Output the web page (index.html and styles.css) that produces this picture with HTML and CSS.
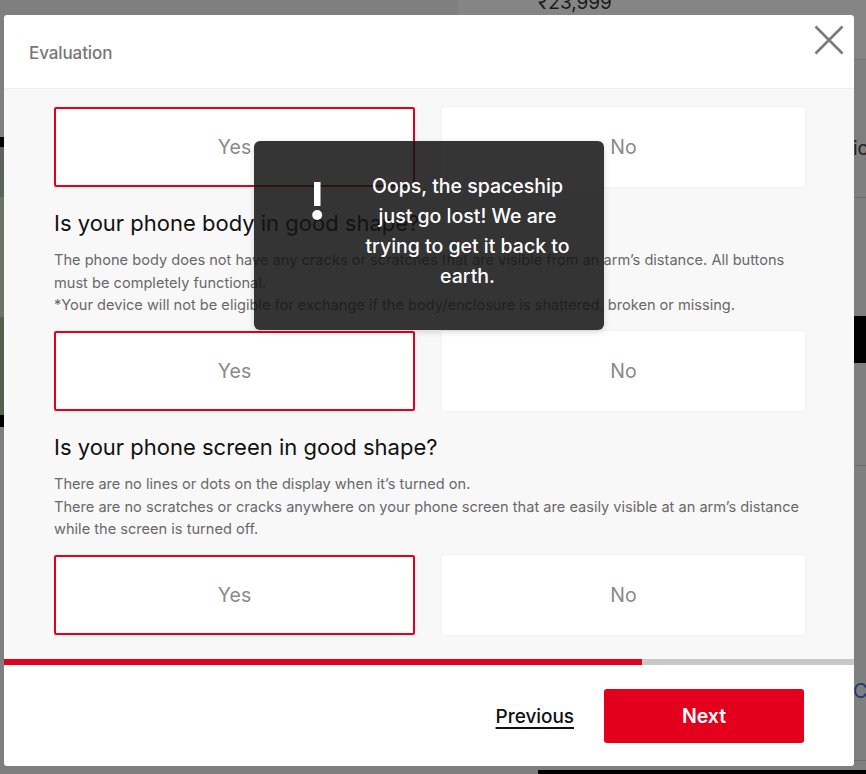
FILE: index.html
```html
<!DOCTYPE html>
<html lang="en">
<head>
<meta charset="utf-8">
<title>Evaluation</title>
<link rel="stylesheet" href="styles.css">
</head>
<body>
<div class="page">
  <div class="bg-top-right"></div>
  <div class="bg-price">₹23,999</div>
  <div class="bg-strip"></div>
  <div class="bg-ic">ic</div>
  <div class="bg-black-band"></div>
  <div class="bg-line bg-line1"></div>
  <div class="bg-line bg-line2"></div>
  <div class="bg-line bg-line3"></div>
  <div class="bg-cl">Cl</div>
  <div class="bg-bottom-bar"></div>
</div>

<div class="modal" role="dialog" aria-label="Evaluation">
  <header class="modal-header">
    <h2 class="modal-title">Evaluation</h2>
    <button class="close" aria-label="Close">
      <svg width="30" height="30" viewBox="0 0 30 30"><path d="M1.5 1.5 L28.5 28.5 M28.5 1.5 L1.5 28.5" stroke="#7a7a7a" stroke-width="2.6" fill="none"/></svg>
    </button>
  </header>

  <div class="modal-body">
    <div class="options">
      <button class="option selected">Yes</button>
      <button class="option">No</button>
    </div>

    <h3 class="question">Is your phone body in good shape?</h3>
    <p class="desc">The phone body does not have any cracks or scratches that are visible from an arm’s distance. All buttons must be completely functional.<br>*Your device will not be eligible for exchange if the body/enclosure is shattered, broken or missing.</p>

    <div class="options">
      <button class="option selected">Yes</button>
      <button class="option">No</button>
    </div>

    <h3 class="question">Is your phone screen in good shape?</h3>
    <p class="desc">There are no lines or dots on the display when it’s turned on.<br>There are no scratches or cracks anywhere on your phone screen that are easily visible at an arm’s distance while the screen is turned off.</p>

    <div class="options">
      <button class="option selected">Yes</button>
      <button class="option">No</button>
    </div>
  </div>

  <div class="progress"><div class="progress-fill" style="width:75%"></div></div>

  <footer class="modal-footer">
    <a class="prev" href="#">Previous</a>
    <button class="next">Next</button>
  </footer>

  <div class="toast" role="alert">
    <svg class="toast-icon" width="12" height="40" viewBox="0 0 12 40"><rect x="3" y="0" width="6.5" height="24" fill="#fff"/><circle cx="6.2" cy="33" r="5" fill="#fff"/></svg>
    <p class="toast-text">Oops, the spaceship just go lost! We are trying to get it back to earth.</p>
  </div>
</div>
</body>
</html>
```

FILE: styles.css
```css
* { box-sizing: border-box; }
html, body { margin: 0; padding: 0; }
body {
  width: 866px;
  height: 774px;
  overflow: hidden;
  background: #7f7f7f;
  font-family: Inter, "Liberation Sans", Arial, sans-serif;
  position: relative;
}

/* dimmed page behind the dialog */
.page { position: absolute; inset: 0; }
.bg-top-right { position: absolute; left: 458px; top: 0; width: 408px; height: 60px; background: #858585; border-bottom: 1px solid #747474; }
.bg-price { position: absolute; left: 538px; top: -9px; font-size: 19px; color: #1a1a1a; }
.bg-strip { position: absolute; left: 0; top: 137px; width: 5px; height: 290px;
  background: linear-gradient(#000 0 10px, #5d635a 10px 60px, #6b7366 60px 180px, #55604f 180px 278px, #000 278px 288px); }
.bg-ic { position: absolute; left: 853px; top: 137px; font-size: 19px; color: #1f1f1f; }
.bg-black-band { position: absolute; left: 852px; top: 316px; width: 14px; height: 47px; background: #000; }
.bg-line { position: absolute; left: 852px; width: 14px; height: 1px; background: #6c6c6c; }
.bg-line1 { top: 197px; }
.bg-line2 { top: 465px; }
.bg-line3 { top: 760px; }
.bg-cl { position: absolute; left: 853px; top: 679px; font-size: 20px; color: #213a74; }
.bg-bottom-bar { position: absolute; left: 538px; top: 770px; width: 328px; height: 4px; background: #000; }

/* dialog */
.modal {
  position: absolute;
  left: 4px;
  top: 15px;
  width: 850px;
  height: 751px;
  background: #fff;
  border-radius: 3px;
  display: flex;
  flex-direction: column;
  overflow: hidden;
}
.modal-header {
  height: 74px;
  flex: none;
  display: flex;
  align-items: center;
  justify-content: space-between;
  padding: 0 9px 0 25px;
  border-bottom: 1px solid #eeeeee;
}
.modal-title {
  margin: 0;
  font-size: 17px;
  font-weight: 500;
  color: #777;
  letter-spacing: -0.1px;
  padding-top: 2px;
}
.close {
  border: 0;
  background: none;
  padding: 0;
  width: 32px;
  height: 32px;
  margin-top: -24px;
  display: flex;
  align-items: center;
  justify-content: center;
}

.modal-body {
  flex: 1;
  background: #f8f8f8;
  padding: 18px 49px 0 50px;
  overflow: hidden;
}
.options {
  display: grid;
  grid-template-columns: 361px 363px;
  column-gap: 27px;
}
.option {
  height: 80px;
  border: 2px solid transparent;
  background: #fff;
  border-radius: 3px;
  box-shadow: 0 0 3px rgba(0,0,0,0.06);
  font-family: inherit;
  font-size: 19.5px;
  color: #8a8a8a;
  padding: 0;
}
.option.selected {
  border-color: #e2001d;
  border-radius: 2px;
  box-shadow: none;
}
.question {
  margin: 22px 0 0;
  font-size: 22px;
  line-height: 28px;
  font-weight: normal;
  color: #111;
}
.desc {
  margin: 12px 0 14.5px;
  font-size: 14.6px;
  line-height: 22.5px;
  color: #686868;
}

.progress {
  height: 6px;
  flex: none;
  background: #c8c8c8;
}
.progress-fill { height: 100%; background: #e2001d; }

.modal-footer {
  height: 101px;
  flex: none;
  display: flex;
  align-items: center;
  justify-content: flex-end;
  gap: 30px;
  padding: 0 50px 0 0;
}
.prev {
  font-size: 19px;
  font-weight: 500;
  color: #111;
  letter-spacing: -0.05px;
  text-decoration: underline;
  text-underline-offset: 4px;
  text-decoration-thickness: 2px;
  margin-top: 1px;
}
.next {
  width: 200px;
  height: 54px;
  background: #e2001d;
  color: #fff;
  border: 0;
  border-radius: 3px;
  font-family: inherit;
  font-size: 19.5px;
  font-weight: 600;
}

/* toast */
.toast {
  position: absolute;
  left: 250px;
  top: 126px;
  width: 350px;
  height: 189px;
  background: rgba(20, 20, 20, 0.86);
  border-radius: 6px;
  box-shadow: 0 2px 6px rgba(0,0,0,0.15);
  display: flex;
  align-items: flex-start;
  padding: 30px 0 0 57px;
}
.toast-icon { flex: none; margin-top: 11px; }
.toast-text {
  margin: 0 0 0 37px;
  width: 215px;
  text-align: center;
  color: #fff;
  font-size: 19.5px;
  font-weight: 500;
  line-height: 30px;
}
```
